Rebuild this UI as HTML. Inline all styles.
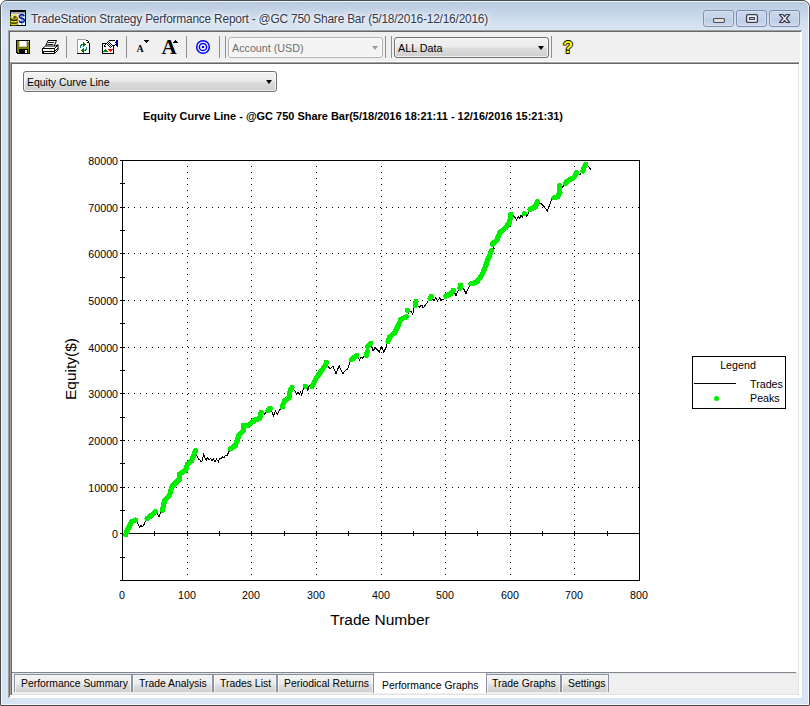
<!DOCTYPE html>
<html>
<head>
<meta charset="utf-8">
<title>TradeStation Strategy Performance Report</title>
<style>
html,body{margin:0;padding:0;}
body{width:810px;height:706px;background:#fff;overflow:hidden;position:relative;font-family:"Liberation Sans",Arial,sans-serif;}
.abs{position:absolute;}
#win{position:absolute;left:0;top:0;width:808px;height:704px;border:1px solid #4a4a4a;border-radius:7px 7px 1px 1px;
 background:linear-gradient(to bottom,#b8c9df 0px,#c2d2e7 9px,#d0deee 20px,#d9e5f3 30px,#d7e4f2 60px,#d7e4f2 100%);overflow:hidden;}
#win:before{content:"";position:absolute;left:0;top:0;right:0;bottom:0;border:1px solid rgba(255,255,255,.75);border-radius:6px 6px 0 0;}
#title{position:absolute;left:31px;top:11px;font-size:11.9px;letter-spacing:-0.2px;line-height:16px;color:#33374a;white-space:nowrap;text-shadow:0 0 6px #fff,0 0 10px #fff,0 0 3px #fff;}
.cap{position:absolute;top:10px;box-sizing:border-box;width:31px;height:17px;border:1px solid #7d8bb0;border-radius:3px;background:linear-gradient(to bottom,#c8d7eb 0,#c5d4e9 45%,#bccde3 52%,#cad8ec 100%);box-shadow:inset 0 0 0 1px rgba(255,255,255,.3);}
#client{position:absolute;left:8px;top:30px;width:794px;height:668px;background:#fff;}
#tb{position:absolute;left:10px;top:32px;width:790px;height:29px;background:#f0f0f0;}
.sep{position:absolute;top:36px;width:1px;height:22px;background:#8f8f8f;}
.dd{position:absolute;box-sizing:border-box;border:1px solid #707070;border-radius:3px;background:linear-gradient(to bottom,#f2f2f2 0,#ebebeb 48%,#dddddd 52%,#cfcfcf 100%);box-shadow:inset 0 0 0 1px rgba(255,255,255,.7);font-size:11.5px;white-space:nowrap;color:#000;}
.dd span{position:absolute;left:3px;top:0;display:inline-block;transform-origin:0 50%;}
.dd i{position:absolute;right:4px;width:0;height:0;border-left:3.5px solid transparent;border-right:3.5px solid transparent;border-top:4px solid #000;}
#pane{position:absolute;left:12px;top:64px;width:786px;height:609px;background:#fff;}
.tab{position:absolute;top:674px;height:18px;box-sizing:border-box;border:1px solid #8b92a1;border-bottom:none;background:linear-gradient(to bottom,#f3f3f3 0,#ececec 9px,#dedede 10px,#d0d0d0 17px);font-size:11px;line-height:14px;white-space:nowrap;color:#000;box-shadow:inset 1px 0 0 rgba(255,255,255,.6),inset -1px 0 0 rgba(255,255,255,.45);}
.tab span{position:absolute;top:1px;display:inline-block;transform:scaleX(.945);transform-origin:0 50%;}
.tab.sel{top:672px;height:21px;background:#fff;box-shadow:none;}
.tab.sel span{top:5px;}
</style>
</head>
<body>
<div id="win">
</div>
<div id="title">TradeStation Strategy Performance Report - @GC 750 Share Bar (5/18/2016-12/16/2016)</div>
<!-- caption buttons -->
<div class="cap" style="left:703px;border-color:#8c919c"><svg class="abs" style="left:0px;top:-1px" width="30" height="17"><rect x="9.5" y="8.500" width="11" height="4" rx="1.200" fill="#dedede" stroke="#4b4b55" stroke-width="1.100"/></svg></div>
<div class="cap" style="left:736px"><svg class="abs" style="left:0px;top:-1px" width="30" height="17"><rect x="9.600" y="4.600" width="10.800" height="7.800" rx="1.200" fill="#f2f2f2" stroke="#3d4052" stroke-width="1.300"/><rect x="12.500" y="7.500" width="5" height="2" fill="#b9c7dc" stroke="#3d4052" stroke-width="1"/></svg></div>
<div class="cap" style="left:769px"><svg class="abs" style="left:0px;top:-1px" width="30" height="17"><path d="M9.500 4.500h3.400l1.700 2.100 1.700-2.100h3.400l-3.400 4 3.400 4h-3.400l-1.700-2.100-1.700 2.100h-3.400l3.400-4z" fill="#f5f5f5" stroke="#3d4052" stroke-width="1.200" stroke-linejoin="round"/></svg></div>

<div id="client"></div>
<div class="abs" style="left:8px;top:30px;width:794px;height:1px;background:#a0a0a0"></div>
<div class="abs" style="left:8px;top:30px;width:1px;height:668px;background:#a0a0a0"></div>
<div class="abs" style="left:9px;top:31px;width:792px;height:1px;background:#696969"></div>
<div class="abs" style="left:9px;top:31px;width:1px;height:666px;background:#696969"></div>
<div id="tb"></div>
<!-- sunken edge of pane -->
<div class="abs" style="left:10px;top:62px;width:789px;height:633px;background:#a0a0a0"></div>
<div class="abs" style="left:11px;top:63px;width:788px;height:632px;background:#696969"></div>
<div class="abs" style="left:12px;top:64px;width:787px;height:631px;background:#e3e3e3"></div>
<div id="pane"></div>
<div class="abs" style="left:12px;top:672px;width:784px;height:1px;background:#7f8691"></div>
<div class="abs" style="left:12px;top:674px;width:786px;height:20px;background:#f0f0f0"></div>
<!-- toolbar separators -->
<div class="sep" style="left:66px"></div>
<div class="sep" style="left:126px"></div>
<div class="sep" style="left:186px"></div>
<div class="sep" style="left:219px"></div>
<div class="sep" style="left:225px"></div>
<div class="sep" style="left:385px"></div>
<div class="sep" style="left:391px"></div>
<div class="sep" style="left:551px"></div>

<!-- dropdowns -->
<div class="dd" style="left:228px;top:37px;width:155px;height:21px;border-color:#adb2b5;background:#f4f4f4;color:#6d6d6d;line-height:21px;font-size:11.8px"><span style="transform:scaleX(.91)">Account (USD)</span><i style="top:8px;border-top-color:#9a9a9a"></i></div>
<div class="dd" style="left:394px;top:37px;width:155px;height:21px;line-height:21px;font-size:11.8px"><span style="transform:scaleX(.91)">ALL Data</span><i style="top:8px"></i></div>
<div class="dd" style="left:23px;top:71px;width:254px;height:21px;line-height:21px;font-size:11px"><span style="transform:scaleX(.95)">Equity Curve Line</span><i style="top:8px"></i></div>

<svg width="810" height="70" viewBox="0 0 810 70" style="position:absolute;left:0;top:0">
<!-- app icon -->
<g shape-rendering="crispEdges">
<rect x="10" y="10" width="16" height="16" fill="#000"/>
<rect x="11" y="12" width="14" height="13" fill="#e8e8e8"/>
<rect x="11" y="12" width="14" height="2" fill="#a8a8a8"/>
<rect x="19" y="14" width="6" height="11" fill="#fff"/>
</g>
<text x="18.300" y="23.400" font-family="'Liberation Sans',sans-serif" font-weight="bold" font-size="12.500" fill="#0c0c9c">$</text>
<g>
<path d="M10.300 17.500v6.700a3.700 1.500 0 0 0 7.400 0v-6.700z" fill="#1c1c00"/>
<path d="M10.300 19.400a3.700 1.500 0 0 0 7.400 0v1.700a3.700 1.500 0 0 1-7.400 0z" fill="#e2e200"/>
<path d="M10.300 22.200a3.700 1.500 0 0 0 7.400 0v1.500a3.700 1.500 0 0 1-7.400 0z" fill="#d6d600"/>
<ellipse cx="14" cy="17.300" rx="3.300" ry="1.900" fill="#55550a" stroke="#e8e800" stroke-width="1"/>
<ellipse cx="12.400" cy="16.900" rx="1.300" ry=".800" fill="#fff"/>
</g>
<!-- floppy -->
<g shape-rendering="crispEdges">
<path d="M16 40h14v14h-13v-1h-1z" fill="#000"/>
<path d="M17 41h12v12h-11v-1h-1z" fill="#808000"/>
<rect x="19" y="41" width="8" height="6" fill="#c8c8c8"/>
<rect x="20" y="41" width="6" height="5" fill="#fff"/>
<rect x="28" y="41" width="1" height="1" fill="#fff"/>
<rect x="19" y="49" width="9" height="4" fill="#000"/>
<rect x="25" y="50" width="2" height="3" fill="#f4f4f4"/>
</g>
<!-- printer -->
<g stroke="#000" stroke-width="1" fill="#fff" stroke-linejoin="miter">
<path d="M45.5 46.5l2.5-6h8.5l-2.5 6z"/>
<path d="M42.5 48.5l3-2.5h10l2.5-1.2v5.2l-3.5 3.5h-12z"/>
<path d="M42.5 48.500h12v3h-12z"/>
<path d="M43.500 51.500h11v2h-11z"/>
<path d="M54.500 48.500l3.5-3.500M54.500 51.500l3.500-3.500M54.500 53.500l3.500-3.500" fill="none"/>
<path d="M48 42.500h6M47.300 44.500h6" fill="none" stroke-width=".9"/>
</g>
<rect x="49" y="49.600" width="3" height="1.200" fill="#e0e000"/>
<!-- doc refresh -->
<g shape-rendering="crispEdges">
<path d="M77 39h9l4 4v11h-13z" fill="#fff"/>
<path d="M77 39h9v1h-8v13h-1z" fill="#a0a0a0"/>
<path d="M77 53h13v1h-13z M89 42h1v12h-1z M86 40h1v3h3v-1h-1v-1h-1v-1h-1v1h1v1h-1z" fill="#000"/>
<rect x="87" y="41" width="1" height="1" fill="#fff"/>
<path d="M83 42h1v5h-1z M84 43h1v3h-1z M85 44h1v1h-1z M81 44h2v1h-2z M83 48h1v5h-1z M82 49h1v3h-1z M81 50h1v1h-1z M84 50h2v1h-2z" fill="#008000"/>
<path d="M80 45h1v3h-1z M81 45h1v1h-1z M86 47h1v3h-1z M85 49h1v1h-1z" fill="#008080"/>
</g>
<!-- properties icon -->
<g shape-rendering="crispEdges">
<rect x="102" y="43" width="12" height="11" fill="#000"/>
<rect x="103" y="44" width="10" height="9" fill="#fff"/>
<path d="M109 41h6v4h-3l-1 2h-2l-4-3z" fill="#fff"/>
<path d="M105 44l3-3h2v3z" fill="#fff"/>
<path d="M116 40h2v7h-1v-1h-1z" fill="#000080"/>
<path d="M109 40h1v1h-1zM110 40h1v1h-1zM111 40h1v1h-1zM112 40h1v1h-1zM113 40h1v1h-1zM114 40h1v1h-1zM108 41h1v1h-1zM107 42h1v1h-1zM109 42h1v1h-1zM106 43h1v1h-1zM108 43h1v1h-1zM110 43h1v1h-1zM105 44h1v1h-1zM107 44h1v1h-1zM109 44h1v1h-1zM111 44h1v1h-1zM115 42h1v1h-1zM115 44h1v1h-1zM104 45h1v1h-1zM108 45h1v1h-1zM110 45h1v1h-1zM112 45h1v1h-1zM113 45h1v1h-1zM114 45h1v1h-1zM104 46h1v1h-1zM105 46h1v1h-1zM109 46h1v1h-1zM111 46h1v1h-1zM110 47h1v1h-1z" fill="#000"/>
<path d="M105 49h1v1h-1z M104 50h3v1h-3z M103 51h5v1h-5z" fill="#008000"/>
<path d="M108 49h5v1h-5z M109 50h3v1h-3z M110 51h1v1h-1z" fill="#ff0000"/>
</g>
<!-- font size icons -->
<g font-family="'Liberation Serif',serif" font-weight="bold" fill="#000">
<text x="136.500" y="52" font-size="10">A</text>
<text x="161.600" y="54" font-size="21">A</text>
</g>
<path d="M144 40h5l-2.500 3z" fill="#000" shape-rendering="crispEdges"/>
<path d="M173 42.500h5l-2.500-3z" fill="#000" shape-rendering="crispEdges"/>
<!-- target -->
<g fill="none" stroke="#0000ff">
<circle cx="203" cy="47" r="6.300" stroke-width="1.500" fill="#fff"/>
<circle cx="203" cy="47" r="3.600" stroke-width="1.500"/>
<circle cx="203" cy="47" r="1.300" fill="#0000ff" stroke="none"/>
</g>
<!-- help -->
<text x="563" y="52.500" font-family="'Liberation Sans',sans-serif" font-weight="bold" font-size="16.500" fill="#ffff00" stroke="#000" stroke-width="1.800" paint-order="stroke" stroke-linejoin="round">?</text>
</svg>

<svg id="chart" width="810" height="706" viewBox="0 0 810 706" style="position:absolute;left:0;top:0">
<g shape-rendering="crispEdges" fill="#000">
<path d="M187 166h1v1h-1zM187 172h1v1h-1zM187 178h1v1h-1zM187 184h1v1h-1zM187 190h1v1h-1zM187 196h1v1h-1zM187 202h1v1h-1zM187 208h1v1h-1zM187 214h1v1h-1zM187 220h1v1h-1zM187 226h1v1h-1zM187 232h1v1h-1zM187 238h1v1h-1zM187 244h1v1h-1zM187 250h1v1h-1zM187 256h1v1h-1zM187 262h1v1h-1zM187 268h1v1h-1zM187 274h1v1h-1zM187 280h1v1h-1zM187 286h1v1h-1zM187 292h1v1h-1zM187 298h1v1h-1zM187 304h1v1h-1zM187 310h1v1h-1zM187 316h1v1h-1zM187 322h1v1h-1zM187 328h1v1h-1zM187 334h1v1h-1zM187 340h1v1h-1zM187 346h1v1h-1zM187 352h1v1h-1zM187 358h1v1h-1zM187 364h1v1h-1zM187 370h1v1h-1zM187 376h1v1h-1zM187 382h1v1h-1zM187 388h1v1h-1zM187 394h1v1h-1zM187 400h1v1h-1zM187 406h1v1h-1zM187 412h1v1h-1zM187 418h1v1h-1zM187 424h1v1h-1zM187 430h1v1h-1zM187 436h1v1h-1zM187 442h1v1h-1zM187 448h1v1h-1zM187 454h1v1h-1zM187 460h1v1h-1zM187 466h1v1h-1zM187 472h1v1h-1zM187 478h1v1h-1zM187 484h1v1h-1zM187 490h1v1h-1zM187 496h1v1h-1zM187 502h1v1h-1zM187 508h1v1h-1zM187 514h1v1h-1zM187 520h1v1h-1zM187 526h1v1h-1zM187 532h1v1h-1zM187 538h1v1h-1zM187 544h1v1h-1zM187 550h1v1h-1zM187 556h1v1h-1zM187 562h1v1h-1zM187 568h1v1h-1zM187 574h1v1h-1zM251 166h1v1h-1zM251 172h1v1h-1zM251 178h1v1h-1zM251 184h1v1h-1zM251 190h1v1h-1zM251 196h1v1h-1zM251 202h1v1h-1zM251 208h1v1h-1zM251 214h1v1h-1zM251 220h1v1h-1zM251 226h1v1h-1zM251 232h1v1h-1zM251 238h1v1h-1zM251 244h1v1h-1zM251 250h1v1h-1zM251 256h1v1h-1zM251 262h1v1h-1zM251 268h1v1h-1zM251 274h1v1h-1zM251 280h1v1h-1zM251 286h1v1h-1zM251 292h1v1h-1zM251 298h1v1h-1zM251 304h1v1h-1zM251 310h1v1h-1zM251 316h1v1h-1zM251 322h1v1h-1zM251 328h1v1h-1zM251 334h1v1h-1zM251 340h1v1h-1zM251 346h1v1h-1zM251 352h1v1h-1zM251 358h1v1h-1zM251 364h1v1h-1zM251 370h1v1h-1zM251 376h1v1h-1zM251 382h1v1h-1zM251 388h1v1h-1zM251 394h1v1h-1zM251 400h1v1h-1zM251 406h1v1h-1zM251 412h1v1h-1zM251 418h1v1h-1zM251 424h1v1h-1zM251 430h1v1h-1zM251 436h1v1h-1zM251 442h1v1h-1zM251 448h1v1h-1zM251 454h1v1h-1zM251 460h1v1h-1zM251 466h1v1h-1zM251 472h1v1h-1zM251 478h1v1h-1zM251 484h1v1h-1zM251 490h1v1h-1zM251 496h1v1h-1zM251 502h1v1h-1zM251 508h1v1h-1zM251 514h1v1h-1zM251 520h1v1h-1zM251 526h1v1h-1zM251 532h1v1h-1zM251 538h1v1h-1zM251 544h1v1h-1zM251 550h1v1h-1zM251 556h1v1h-1zM251 562h1v1h-1zM251 568h1v1h-1zM251 574h1v1h-1zM316 166h1v1h-1zM316 172h1v1h-1zM316 178h1v1h-1zM316 184h1v1h-1zM316 190h1v1h-1zM316 196h1v1h-1zM316 202h1v1h-1zM316 208h1v1h-1zM316 214h1v1h-1zM316 220h1v1h-1zM316 226h1v1h-1zM316 232h1v1h-1zM316 238h1v1h-1zM316 244h1v1h-1zM316 250h1v1h-1zM316 256h1v1h-1zM316 262h1v1h-1zM316 268h1v1h-1zM316 274h1v1h-1zM316 280h1v1h-1zM316 286h1v1h-1zM316 292h1v1h-1zM316 298h1v1h-1zM316 304h1v1h-1zM316 310h1v1h-1zM316 316h1v1h-1zM316 322h1v1h-1zM316 328h1v1h-1zM316 334h1v1h-1zM316 340h1v1h-1zM316 346h1v1h-1zM316 352h1v1h-1zM316 358h1v1h-1zM316 364h1v1h-1zM316 370h1v1h-1zM316 376h1v1h-1zM316 382h1v1h-1zM316 388h1v1h-1zM316 394h1v1h-1zM316 400h1v1h-1zM316 406h1v1h-1zM316 412h1v1h-1zM316 418h1v1h-1zM316 424h1v1h-1zM316 430h1v1h-1zM316 436h1v1h-1zM316 442h1v1h-1zM316 448h1v1h-1zM316 454h1v1h-1zM316 460h1v1h-1zM316 466h1v1h-1zM316 472h1v1h-1zM316 478h1v1h-1zM316 484h1v1h-1zM316 490h1v1h-1zM316 496h1v1h-1zM316 502h1v1h-1zM316 508h1v1h-1zM316 514h1v1h-1zM316 520h1v1h-1zM316 526h1v1h-1zM316 532h1v1h-1zM316 538h1v1h-1zM316 544h1v1h-1zM316 550h1v1h-1zM316 556h1v1h-1zM316 562h1v1h-1zM316 568h1v1h-1zM316 574h1v1h-1zM381 166h1v1h-1zM381 172h1v1h-1zM381 178h1v1h-1zM381 184h1v1h-1zM381 190h1v1h-1zM381 196h1v1h-1zM381 202h1v1h-1zM381 208h1v1h-1zM381 214h1v1h-1zM381 220h1v1h-1zM381 226h1v1h-1zM381 232h1v1h-1zM381 238h1v1h-1zM381 244h1v1h-1zM381 250h1v1h-1zM381 256h1v1h-1zM381 262h1v1h-1zM381 268h1v1h-1zM381 274h1v1h-1zM381 280h1v1h-1zM381 286h1v1h-1zM381 292h1v1h-1zM381 298h1v1h-1zM381 304h1v1h-1zM381 310h1v1h-1zM381 316h1v1h-1zM381 322h1v1h-1zM381 328h1v1h-1zM381 334h1v1h-1zM381 340h1v1h-1zM381 346h1v1h-1zM381 352h1v1h-1zM381 358h1v1h-1zM381 364h1v1h-1zM381 370h1v1h-1zM381 376h1v1h-1zM381 382h1v1h-1zM381 388h1v1h-1zM381 394h1v1h-1zM381 400h1v1h-1zM381 406h1v1h-1zM381 412h1v1h-1zM381 418h1v1h-1zM381 424h1v1h-1zM381 430h1v1h-1zM381 436h1v1h-1zM381 442h1v1h-1zM381 448h1v1h-1zM381 454h1v1h-1zM381 460h1v1h-1zM381 466h1v1h-1zM381 472h1v1h-1zM381 478h1v1h-1zM381 484h1v1h-1zM381 490h1v1h-1zM381 496h1v1h-1zM381 502h1v1h-1zM381 508h1v1h-1zM381 514h1v1h-1zM381 520h1v1h-1zM381 526h1v1h-1zM381 532h1v1h-1zM381 538h1v1h-1zM381 544h1v1h-1zM381 550h1v1h-1zM381 556h1v1h-1zM381 562h1v1h-1zM381 568h1v1h-1zM381 574h1v1h-1zM445 166h1v1h-1zM445 172h1v1h-1zM445 178h1v1h-1zM445 184h1v1h-1zM445 190h1v1h-1zM445 196h1v1h-1zM445 202h1v1h-1zM445 208h1v1h-1zM445 214h1v1h-1zM445 220h1v1h-1zM445 226h1v1h-1zM445 232h1v1h-1zM445 238h1v1h-1zM445 244h1v1h-1zM445 250h1v1h-1zM445 256h1v1h-1zM445 262h1v1h-1zM445 268h1v1h-1zM445 274h1v1h-1zM445 280h1v1h-1zM445 286h1v1h-1zM445 292h1v1h-1zM445 298h1v1h-1zM445 304h1v1h-1zM445 310h1v1h-1zM445 316h1v1h-1zM445 322h1v1h-1zM445 328h1v1h-1zM445 334h1v1h-1zM445 340h1v1h-1zM445 346h1v1h-1zM445 352h1v1h-1zM445 358h1v1h-1zM445 364h1v1h-1zM445 370h1v1h-1zM445 376h1v1h-1zM445 382h1v1h-1zM445 388h1v1h-1zM445 394h1v1h-1zM445 400h1v1h-1zM445 406h1v1h-1zM445 412h1v1h-1zM445 418h1v1h-1zM445 424h1v1h-1zM445 430h1v1h-1zM445 436h1v1h-1zM445 442h1v1h-1zM445 448h1v1h-1zM445 454h1v1h-1zM445 460h1v1h-1zM445 466h1v1h-1zM445 472h1v1h-1zM445 478h1v1h-1zM445 484h1v1h-1zM445 490h1v1h-1zM445 496h1v1h-1zM445 502h1v1h-1zM445 508h1v1h-1zM445 514h1v1h-1zM445 520h1v1h-1zM445 526h1v1h-1zM445 532h1v1h-1zM445 538h1v1h-1zM445 544h1v1h-1zM445 550h1v1h-1zM445 556h1v1h-1zM445 562h1v1h-1zM445 568h1v1h-1zM445 574h1v1h-1zM510 166h1v1h-1zM510 172h1v1h-1zM510 178h1v1h-1zM510 184h1v1h-1zM510 190h1v1h-1zM510 196h1v1h-1zM510 202h1v1h-1zM510 208h1v1h-1zM510 214h1v1h-1zM510 220h1v1h-1zM510 226h1v1h-1zM510 232h1v1h-1zM510 238h1v1h-1zM510 244h1v1h-1zM510 250h1v1h-1zM510 256h1v1h-1zM510 262h1v1h-1zM510 268h1v1h-1zM510 274h1v1h-1zM510 280h1v1h-1zM510 286h1v1h-1zM510 292h1v1h-1zM510 298h1v1h-1zM510 304h1v1h-1zM510 310h1v1h-1zM510 316h1v1h-1zM510 322h1v1h-1zM510 328h1v1h-1zM510 334h1v1h-1zM510 340h1v1h-1zM510 346h1v1h-1zM510 352h1v1h-1zM510 358h1v1h-1zM510 364h1v1h-1zM510 370h1v1h-1zM510 376h1v1h-1zM510 382h1v1h-1zM510 388h1v1h-1zM510 394h1v1h-1zM510 400h1v1h-1zM510 406h1v1h-1zM510 412h1v1h-1zM510 418h1v1h-1zM510 424h1v1h-1zM510 430h1v1h-1zM510 436h1v1h-1zM510 442h1v1h-1zM510 448h1v1h-1zM510 454h1v1h-1zM510 460h1v1h-1zM510 466h1v1h-1zM510 472h1v1h-1zM510 478h1v1h-1zM510 484h1v1h-1zM510 490h1v1h-1zM510 496h1v1h-1zM510 502h1v1h-1zM510 508h1v1h-1zM510 514h1v1h-1zM510 520h1v1h-1zM510 526h1v1h-1zM510 532h1v1h-1zM510 538h1v1h-1zM510 544h1v1h-1zM510 550h1v1h-1zM510 556h1v1h-1zM510 562h1v1h-1zM510 568h1v1h-1zM510 574h1v1h-1zM574 166h1v1h-1zM574 172h1v1h-1zM574 178h1v1h-1zM574 184h1v1h-1zM574 190h1v1h-1zM574 196h1v1h-1zM574 202h1v1h-1zM574 208h1v1h-1zM574 214h1v1h-1zM574 220h1v1h-1zM574 226h1v1h-1zM574 232h1v1h-1zM574 238h1v1h-1zM574 244h1v1h-1zM574 250h1v1h-1zM574 256h1v1h-1zM574 262h1v1h-1zM574 268h1v1h-1zM574 274h1v1h-1zM574 280h1v1h-1zM574 286h1v1h-1zM574 292h1v1h-1zM574 298h1v1h-1zM574 304h1v1h-1zM574 310h1v1h-1zM574 316h1v1h-1zM574 322h1v1h-1zM574 328h1v1h-1zM574 334h1v1h-1zM574 340h1v1h-1zM574 346h1v1h-1zM574 352h1v1h-1zM574 358h1v1h-1zM574 364h1v1h-1zM574 370h1v1h-1zM574 376h1v1h-1zM574 382h1v1h-1zM574 388h1v1h-1zM574 394h1v1h-1zM574 400h1v1h-1zM574 406h1v1h-1zM574 412h1v1h-1zM574 418h1v1h-1zM574 424h1v1h-1zM574 430h1v1h-1zM574 436h1v1h-1zM574 442h1v1h-1zM574 448h1v1h-1zM574 454h1v1h-1zM574 460h1v1h-1zM574 466h1v1h-1zM574 472h1v1h-1zM574 478h1v1h-1zM574 484h1v1h-1zM574 490h1v1h-1zM574 496h1v1h-1zM574 502h1v1h-1zM574 508h1v1h-1zM574 514h1v1h-1zM574 520h1v1h-1zM574 526h1v1h-1zM574 532h1v1h-1zM574 538h1v1h-1zM574 544h1v1h-1zM574 550h1v1h-1zM574 556h1v1h-1zM574 562h1v1h-1zM574 568h1v1h-1zM574 574h1v1h-1zM128 487h1v1h-1zM134 487h1v1h-1zM140 487h1v1h-1zM146 487h1v1h-1zM152 487h1v1h-1zM158 487h1v1h-1zM164 487h1v1h-1zM170 487h1v1h-1zM176 487h1v1h-1zM182 487h1v1h-1zM188 487h1v1h-1zM194 487h1v1h-1zM200 487h1v1h-1zM206 487h1v1h-1zM212 487h1v1h-1zM218 487h1v1h-1zM224 487h1v1h-1zM230 487h1v1h-1zM236 487h1v1h-1zM242 487h1v1h-1zM248 487h1v1h-1zM254 487h1v1h-1zM260 487h1v1h-1zM266 487h1v1h-1zM272 487h1v1h-1zM278 487h1v1h-1zM284 487h1v1h-1zM290 487h1v1h-1zM296 487h1v1h-1zM302 487h1v1h-1zM308 487h1v1h-1zM314 487h1v1h-1zM320 487h1v1h-1zM326 487h1v1h-1zM332 487h1v1h-1zM338 487h1v1h-1zM344 487h1v1h-1zM350 487h1v1h-1zM356 487h1v1h-1zM362 487h1v1h-1zM368 487h1v1h-1zM374 487h1v1h-1zM380 487h1v1h-1zM386 487h1v1h-1zM392 487h1v1h-1zM398 487h1v1h-1zM404 487h1v1h-1zM410 487h1v1h-1zM416 487h1v1h-1zM422 487h1v1h-1zM428 487h1v1h-1zM434 487h1v1h-1zM440 487h1v1h-1zM446 487h1v1h-1zM452 487h1v1h-1zM458 487h1v1h-1zM464 487h1v1h-1zM470 487h1v1h-1zM476 487h1v1h-1zM482 487h1v1h-1zM488 487h1v1h-1zM494 487h1v1h-1zM500 487h1v1h-1zM506 487h1v1h-1zM512 487h1v1h-1zM518 487h1v1h-1zM524 487h1v1h-1zM530 487h1v1h-1zM536 487h1v1h-1zM542 487h1v1h-1zM548 487h1v1h-1zM554 487h1v1h-1zM560 487h1v1h-1zM566 487h1v1h-1zM572 487h1v1h-1zM578 487h1v1h-1zM584 487h1v1h-1zM590 487h1v1h-1zM596 487h1v1h-1zM602 487h1v1h-1zM608 487h1v1h-1zM614 487h1v1h-1zM620 487h1v1h-1zM626 487h1v1h-1zM632 487h1v1h-1zM638 487h1v1h-1zM128 440h1v1h-1zM134 440h1v1h-1zM140 440h1v1h-1zM146 440h1v1h-1zM152 440h1v1h-1zM158 440h1v1h-1zM164 440h1v1h-1zM170 440h1v1h-1zM176 440h1v1h-1zM182 440h1v1h-1zM188 440h1v1h-1zM194 440h1v1h-1zM200 440h1v1h-1zM206 440h1v1h-1zM212 440h1v1h-1zM218 440h1v1h-1zM224 440h1v1h-1zM230 440h1v1h-1zM236 440h1v1h-1zM242 440h1v1h-1zM248 440h1v1h-1zM254 440h1v1h-1zM260 440h1v1h-1zM266 440h1v1h-1zM272 440h1v1h-1zM278 440h1v1h-1zM284 440h1v1h-1zM290 440h1v1h-1zM296 440h1v1h-1zM302 440h1v1h-1zM308 440h1v1h-1zM314 440h1v1h-1zM320 440h1v1h-1zM326 440h1v1h-1zM332 440h1v1h-1zM338 440h1v1h-1zM344 440h1v1h-1zM350 440h1v1h-1zM356 440h1v1h-1zM362 440h1v1h-1zM368 440h1v1h-1zM374 440h1v1h-1zM380 440h1v1h-1zM386 440h1v1h-1zM392 440h1v1h-1zM398 440h1v1h-1zM404 440h1v1h-1zM410 440h1v1h-1zM416 440h1v1h-1zM422 440h1v1h-1zM428 440h1v1h-1zM434 440h1v1h-1zM440 440h1v1h-1zM446 440h1v1h-1zM452 440h1v1h-1zM458 440h1v1h-1zM464 440h1v1h-1zM470 440h1v1h-1zM476 440h1v1h-1zM482 440h1v1h-1zM488 440h1v1h-1zM494 440h1v1h-1zM500 440h1v1h-1zM506 440h1v1h-1zM512 440h1v1h-1zM518 440h1v1h-1zM524 440h1v1h-1zM530 440h1v1h-1zM536 440h1v1h-1zM542 440h1v1h-1zM548 440h1v1h-1zM554 440h1v1h-1zM560 440h1v1h-1zM566 440h1v1h-1zM572 440h1v1h-1zM578 440h1v1h-1zM584 440h1v1h-1zM590 440h1v1h-1zM596 440h1v1h-1zM602 440h1v1h-1zM608 440h1v1h-1zM614 440h1v1h-1zM620 440h1v1h-1zM626 440h1v1h-1zM632 440h1v1h-1zM638 440h1v1h-1zM128 393h1v1h-1zM134 393h1v1h-1zM140 393h1v1h-1zM146 393h1v1h-1zM152 393h1v1h-1zM158 393h1v1h-1zM164 393h1v1h-1zM170 393h1v1h-1zM176 393h1v1h-1zM182 393h1v1h-1zM188 393h1v1h-1zM194 393h1v1h-1zM200 393h1v1h-1zM206 393h1v1h-1zM212 393h1v1h-1zM218 393h1v1h-1zM224 393h1v1h-1zM230 393h1v1h-1zM236 393h1v1h-1zM242 393h1v1h-1zM248 393h1v1h-1zM254 393h1v1h-1zM260 393h1v1h-1zM266 393h1v1h-1zM272 393h1v1h-1zM278 393h1v1h-1zM284 393h1v1h-1zM290 393h1v1h-1zM296 393h1v1h-1zM302 393h1v1h-1zM308 393h1v1h-1zM314 393h1v1h-1zM320 393h1v1h-1zM326 393h1v1h-1zM332 393h1v1h-1zM338 393h1v1h-1zM344 393h1v1h-1zM350 393h1v1h-1zM356 393h1v1h-1zM362 393h1v1h-1zM368 393h1v1h-1zM374 393h1v1h-1zM380 393h1v1h-1zM386 393h1v1h-1zM392 393h1v1h-1zM398 393h1v1h-1zM404 393h1v1h-1zM410 393h1v1h-1zM416 393h1v1h-1zM422 393h1v1h-1zM428 393h1v1h-1zM434 393h1v1h-1zM440 393h1v1h-1zM446 393h1v1h-1zM452 393h1v1h-1zM458 393h1v1h-1zM464 393h1v1h-1zM470 393h1v1h-1zM476 393h1v1h-1zM482 393h1v1h-1zM488 393h1v1h-1zM494 393h1v1h-1zM500 393h1v1h-1zM506 393h1v1h-1zM512 393h1v1h-1zM518 393h1v1h-1zM524 393h1v1h-1zM530 393h1v1h-1zM536 393h1v1h-1zM542 393h1v1h-1zM548 393h1v1h-1zM554 393h1v1h-1zM560 393h1v1h-1zM566 393h1v1h-1zM572 393h1v1h-1zM578 393h1v1h-1zM584 393h1v1h-1zM590 393h1v1h-1zM596 393h1v1h-1zM602 393h1v1h-1zM608 393h1v1h-1zM614 393h1v1h-1zM620 393h1v1h-1zM626 393h1v1h-1zM632 393h1v1h-1zM638 393h1v1h-1zM128 347h1v1h-1zM134 347h1v1h-1zM140 347h1v1h-1zM146 347h1v1h-1zM152 347h1v1h-1zM158 347h1v1h-1zM164 347h1v1h-1zM170 347h1v1h-1zM176 347h1v1h-1zM182 347h1v1h-1zM188 347h1v1h-1zM194 347h1v1h-1zM200 347h1v1h-1zM206 347h1v1h-1zM212 347h1v1h-1zM218 347h1v1h-1zM224 347h1v1h-1zM230 347h1v1h-1zM236 347h1v1h-1zM242 347h1v1h-1zM248 347h1v1h-1zM254 347h1v1h-1zM260 347h1v1h-1zM266 347h1v1h-1zM272 347h1v1h-1zM278 347h1v1h-1zM284 347h1v1h-1zM290 347h1v1h-1zM296 347h1v1h-1zM302 347h1v1h-1zM308 347h1v1h-1zM314 347h1v1h-1zM320 347h1v1h-1zM326 347h1v1h-1zM332 347h1v1h-1zM338 347h1v1h-1zM344 347h1v1h-1zM350 347h1v1h-1zM356 347h1v1h-1zM362 347h1v1h-1zM368 347h1v1h-1zM374 347h1v1h-1zM380 347h1v1h-1zM386 347h1v1h-1zM392 347h1v1h-1zM398 347h1v1h-1zM404 347h1v1h-1zM410 347h1v1h-1zM416 347h1v1h-1zM422 347h1v1h-1zM428 347h1v1h-1zM434 347h1v1h-1zM440 347h1v1h-1zM446 347h1v1h-1zM452 347h1v1h-1zM458 347h1v1h-1zM464 347h1v1h-1zM470 347h1v1h-1zM476 347h1v1h-1zM482 347h1v1h-1zM488 347h1v1h-1zM494 347h1v1h-1zM500 347h1v1h-1zM506 347h1v1h-1zM512 347h1v1h-1zM518 347h1v1h-1zM524 347h1v1h-1zM530 347h1v1h-1zM536 347h1v1h-1zM542 347h1v1h-1zM548 347h1v1h-1zM554 347h1v1h-1zM560 347h1v1h-1zM566 347h1v1h-1zM572 347h1v1h-1zM578 347h1v1h-1zM584 347h1v1h-1zM590 347h1v1h-1zM596 347h1v1h-1zM602 347h1v1h-1zM608 347h1v1h-1zM614 347h1v1h-1zM620 347h1v1h-1zM626 347h1v1h-1zM632 347h1v1h-1zM638 347h1v1h-1zM128 300h1v1h-1zM134 300h1v1h-1zM140 300h1v1h-1zM146 300h1v1h-1zM152 300h1v1h-1zM158 300h1v1h-1zM164 300h1v1h-1zM170 300h1v1h-1zM176 300h1v1h-1zM182 300h1v1h-1zM188 300h1v1h-1zM194 300h1v1h-1zM200 300h1v1h-1zM206 300h1v1h-1zM212 300h1v1h-1zM218 300h1v1h-1zM224 300h1v1h-1zM230 300h1v1h-1zM236 300h1v1h-1zM242 300h1v1h-1zM248 300h1v1h-1zM254 300h1v1h-1zM260 300h1v1h-1zM266 300h1v1h-1zM272 300h1v1h-1zM278 300h1v1h-1zM284 300h1v1h-1zM290 300h1v1h-1zM296 300h1v1h-1zM302 300h1v1h-1zM308 300h1v1h-1zM314 300h1v1h-1zM320 300h1v1h-1zM326 300h1v1h-1zM332 300h1v1h-1zM338 300h1v1h-1zM344 300h1v1h-1zM350 300h1v1h-1zM356 300h1v1h-1zM362 300h1v1h-1zM368 300h1v1h-1zM374 300h1v1h-1zM380 300h1v1h-1zM386 300h1v1h-1zM392 300h1v1h-1zM398 300h1v1h-1zM404 300h1v1h-1zM410 300h1v1h-1zM416 300h1v1h-1zM422 300h1v1h-1zM428 300h1v1h-1zM434 300h1v1h-1zM440 300h1v1h-1zM446 300h1v1h-1zM452 300h1v1h-1zM458 300h1v1h-1zM464 300h1v1h-1zM470 300h1v1h-1zM476 300h1v1h-1zM482 300h1v1h-1zM488 300h1v1h-1zM494 300h1v1h-1zM500 300h1v1h-1zM506 300h1v1h-1zM512 300h1v1h-1zM518 300h1v1h-1zM524 300h1v1h-1zM530 300h1v1h-1zM536 300h1v1h-1zM542 300h1v1h-1zM548 300h1v1h-1zM554 300h1v1h-1zM560 300h1v1h-1zM566 300h1v1h-1zM572 300h1v1h-1zM578 300h1v1h-1zM584 300h1v1h-1zM590 300h1v1h-1zM596 300h1v1h-1zM602 300h1v1h-1zM608 300h1v1h-1zM614 300h1v1h-1zM620 300h1v1h-1zM626 300h1v1h-1zM632 300h1v1h-1zM638 300h1v1h-1zM128 253h1v1h-1zM134 253h1v1h-1zM140 253h1v1h-1zM146 253h1v1h-1zM152 253h1v1h-1zM158 253h1v1h-1zM164 253h1v1h-1zM170 253h1v1h-1zM176 253h1v1h-1zM182 253h1v1h-1zM188 253h1v1h-1zM194 253h1v1h-1zM200 253h1v1h-1zM206 253h1v1h-1zM212 253h1v1h-1zM218 253h1v1h-1zM224 253h1v1h-1zM230 253h1v1h-1zM236 253h1v1h-1zM242 253h1v1h-1zM248 253h1v1h-1zM254 253h1v1h-1zM260 253h1v1h-1zM266 253h1v1h-1zM272 253h1v1h-1zM278 253h1v1h-1zM284 253h1v1h-1zM290 253h1v1h-1zM296 253h1v1h-1zM302 253h1v1h-1zM308 253h1v1h-1zM314 253h1v1h-1zM320 253h1v1h-1zM326 253h1v1h-1zM332 253h1v1h-1zM338 253h1v1h-1zM344 253h1v1h-1zM350 253h1v1h-1zM356 253h1v1h-1zM362 253h1v1h-1zM368 253h1v1h-1zM374 253h1v1h-1zM380 253h1v1h-1zM386 253h1v1h-1zM392 253h1v1h-1zM398 253h1v1h-1zM404 253h1v1h-1zM410 253h1v1h-1zM416 253h1v1h-1zM422 253h1v1h-1zM428 253h1v1h-1zM434 253h1v1h-1zM440 253h1v1h-1zM446 253h1v1h-1zM452 253h1v1h-1zM458 253h1v1h-1zM464 253h1v1h-1zM470 253h1v1h-1zM476 253h1v1h-1zM482 253h1v1h-1zM488 253h1v1h-1zM494 253h1v1h-1zM500 253h1v1h-1zM506 253h1v1h-1zM512 253h1v1h-1zM518 253h1v1h-1zM524 253h1v1h-1zM530 253h1v1h-1zM536 253h1v1h-1zM542 253h1v1h-1zM548 253h1v1h-1zM554 253h1v1h-1zM560 253h1v1h-1zM566 253h1v1h-1zM572 253h1v1h-1zM578 253h1v1h-1zM584 253h1v1h-1zM590 253h1v1h-1zM596 253h1v1h-1zM602 253h1v1h-1zM608 253h1v1h-1zM614 253h1v1h-1zM620 253h1v1h-1zM626 253h1v1h-1zM632 253h1v1h-1zM638 253h1v1h-1zM128 207h1v1h-1zM134 207h1v1h-1zM140 207h1v1h-1zM146 207h1v1h-1zM152 207h1v1h-1zM158 207h1v1h-1zM164 207h1v1h-1zM170 207h1v1h-1zM176 207h1v1h-1zM182 207h1v1h-1zM188 207h1v1h-1zM194 207h1v1h-1zM200 207h1v1h-1zM206 207h1v1h-1zM212 207h1v1h-1zM218 207h1v1h-1zM224 207h1v1h-1zM230 207h1v1h-1zM236 207h1v1h-1zM242 207h1v1h-1zM248 207h1v1h-1zM254 207h1v1h-1zM260 207h1v1h-1zM266 207h1v1h-1zM272 207h1v1h-1zM278 207h1v1h-1zM284 207h1v1h-1zM290 207h1v1h-1zM296 207h1v1h-1zM302 207h1v1h-1zM308 207h1v1h-1zM314 207h1v1h-1zM320 207h1v1h-1zM326 207h1v1h-1zM332 207h1v1h-1zM338 207h1v1h-1zM344 207h1v1h-1zM350 207h1v1h-1zM356 207h1v1h-1zM362 207h1v1h-1zM368 207h1v1h-1zM374 207h1v1h-1zM380 207h1v1h-1zM386 207h1v1h-1zM392 207h1v1h-1zM398 207h1v1h-1zM404 207h1v1h-1zM410 207h1v1h-1zM416 207h1v1h-1zM422 207h1v1h-1zM428 207h1v1h-1zM434 207h1v1h-1zM440 207h1v1h-1zM446 207h1v1h-1zM452 207h1v1h-1zM458 207h1v1h-1zM464 207h1v1h-1zM470 207h1v1h-1zM476 207h1v1h-1zM482 207h1v1h-1zM488 207h1v1h-1zM494 207h1v1h-1zM500 207h1v1h-1zM506 207h1v1h-1zM512 207h1v1h-1zM518 207h1v1h-1zM524 207h1v1h-1zM530 207h1v1h-1zM536 207h1v1h-1zM542 207h1v1h-1zM548 207h1v1h-1zM554 207h1v1h-1zM560 207h1v1h-1zM566 207h1v1h-1zM572 207h1v1h-1zM578 207h1v1h-1zM584 207h1v1h-1zM590 207h1v1h-1zM596 207h1v1h-1zM602 207h1v1h-1zM608 207h1v1h-1zM614 207h1v1h-1zM620 207h1v1h-1zM626 207h1v1h-1zM632 207h1v1h-1zM638 207h1v1h-1z"/>
<path d="M122 160h518v1h-518z M122 160h1v421h-1z M639 160h1v421h-1z M122 580h518v1h-518z M122 533h517v1h-517z"/>
<path d="M120 580h5v1h-5zM120 557h5v1h-5zM120 533h5v1h-5zM120 510h5v1h-5zM120 487h5v1h-5zM120 463h5v1h-5zM120 440h5v1h-5zM120 417h5v1h-5zM120 393h5v1h-5zM120 370h5v1h-5zM120 347h5v1h-5zM120 323h5v1h-5zM120 300h5v1h-5zM120 277h5v1h-5zM120 253h5v1h-5zM120 230h5v1h-5zM120 207h5v1h-5zM120 183h5v1h-5zM120 160h5v1h-5zM154 531h1v5h-1zM187 531h1v5h-1zM219 531h1v5h-1zM251 531h1v5h-1zM284 531h1v5h-1zM316 531h1v5h-1zM348 531h1v5h-1zM381 531h1v5h-1zM413 531h1v5h-1zM445 531h1v5h-1zM477 531h1v5h-1zM510 531h1v5h-1zM542 531h1v5h-1zM574 531h1v5h-1zM607 531h1v5h-1z"/>
</g>
<polyline points="125.7,534.5 127.5,530.0 129.5,526.0 131.3,522.0 133.5,521.0 135.6,520.0 137.5,523.0 139.6,527.4 141.0,525.0 142.2,527.0 144.3,524.0 145.5,520.5 147.0,518.5 150.0,516.5 152.5,514.5 155.4,511.7 157.0,513.0 159.0,516.5 161.0,512.0 162.4,510.2 163.5,505.0 165.0,500.0 167.0,498.0 169.3,496.0 170.5,491.0 172.0,486.7 175.5,483.0 179.4,478.9 179.4,474.3 183.0,472.0 186.0,469.6 187.4,464.4 191.5,461.0 193.5,455.5 195.6,450.6 197.0,456.0 198.5,459.0 200.0,460.0 201.0,462.0 202.2,461.0 203.5,454.3 205.0,458.0 206.3,460.0 207.5,457.5 209.0,460.0 210.5,458.5 212.0,461.0 213.5,459.0 215.0,461.5 216.5,459.0 218.3,461.7 219.5,458.5 221.0,459.0 222.5,457.0 224.0,457.5 225.5,455.5 227.0,456.0 228.5,452.4 230.4,448.7 232.5,447.5 235.0,446.0 237.0,441.0 238.7,435.7 241.0,433.0 243.3,431.0 243.3,425.4 246.0,425.6 248.5,425.4 251.0,423.0 254.0,420.4 257.0,419.5 259.6,418.5 260.5,415.0 261.3,412.4 263.0,413.5 264.5,414.5 266.0,412.0 268.0,410.6 270.4,408.3 272.0,412.0 273.5,416.0 275.4,410.6 277.2,414.3 279.6,410.0 281.0,409.0 282.4,406.9 283.5,403.5 284.6,400.7 287.0,399.0 288.9,398.0 289.6,394.0 290.2,391.0 292.0,387.4 293.5,389.5 294.8,391.0 296.7,394.0 298.0,392.0 299.2,394.5 300.4,392.0 301.5,394.4 302.6,390.5 304.0,388.0 305.4,386.5 306.8,388.0 307.8,390.2 309.3,385.6 310.5,387.5 312.0,386.5 314.0,382.5 316.0,378.5 318.5,375.0 320.7,371.7 323.0,368.5 325.4,365.2 326.3,362.4 328.0,366.0 330.0,369.0 332.8,366.0 334.5,370.0 336.0,373.5 337.8,369.0 339.3,366.0 341.0,370.0 343.0,373.5 345.0,371.0 346.5,370.5 348.5,367.0 349.5,363.0 351.3,359.6 354.0,357.5 356.9,355.6 358.5,358.0 359.6,359.8 361.0,357.5 362.4,358.0 364.0,356.5 366.5,355.2 367.2,351.8 367.8,346.3 370.6,343.3 372.0,347.5 373.0,351.0 374.5,349.0 375.7,348.0 377.5,350.0 379.4,352.0 380.5,349.0 381.9,347.2 383.0,350.0 384.0,352.4 385.5,348.0 386.9,344.4 388.0,341.7 389.6,337.0 392.5,334.5 395.0,332.4 397.0,328.0 398.9,324.0 400.7,319.4 403.5,318.0 406.3,316.7 408.0,314.5 408.5,312.0 407.2,310.2 409.0,311.5 411.0,311.0 412.8,314.8 413.8,308.0 415.2,305.6 416.0,301.5 417.5,305.0 419.3,307.4 420.8,305.5 422.0,305.5 423.0,308.3 425.0,305.5 427.6,301.9 430.0,298.5 431.3,296.3 432.5,299.0 434.0,301.0 435.5,297.5 437.5,301.0 439.5,298.0 441.5,300.0 444.3,299.0 446.0,296.3 448.5,295.0 450.7,293.5 453.5,290.4 455.0,293.5 456.0,296.0 457.0,293.0 458.3,290.0 460.0,288.0 460.6,285.2 462.0,287.0 463.7,289.0 465.0,291.5 466.0,293.5 467.5,290.0 469.3,286.0 471.0,283.9 474.0,283.0 476.7,281.9 479.0,279.0 481.3,275.9 483.0,272.5 484.4,269.4 485.7,266.0 486.9,262.0 488.3,258.5 489.6,255.6 491.6,250.5 493.0,250.0 494.2,249.0 493.5,247.0 492.8,246.0 492.4,244.4 494.7,242.0 497.0,240.0 498.5,236.0 500.0,232.2 503.0,230.0 505.6,227.8 507.6,225.0 509.6,222.2 510.2,218.0 510.7,214.4 512.5,215.0 514.4,216.7 516.7,220.0 518.2,216.5 519.5,218.5 521.0,215.5 522.2,217.5 523.3,214.4 524.4,213.8 525.6,215.0 526.7,216.7 528.3,213.0 530.0,209.6 533.0,208.0 535.6,206.7 536.5,204.0 537.3,201.6 539.5,203.0 542.2,204.4 544.8,207.5 547.3,211.0 549.0,206.5 551.0,201.0 552.5,199.0 554.0,197.8 557.8,196.7 560.0,192.2 559.6,185.6 561.5,187.5 563.3,186.7 564.3,185.0 565.6,183.3 567.2,181.5 568.9,180.0 571.0,179.0 573.3,177.8 575.0,175.5 576.7,172.9 578.5,174.0 580.0,174.4 581.5,172.5 582.9,171.0 584.4,166.7 585.6,164.4 587.3,165.5 588.9,166.7 590.7,169.6" fill="none" stroke="#000" stroke-width="1" shape-rendering="crispEdges"/>
<g fill="#00ee00" shape-rendering="crispEdges">
<circle cx="125.7" cy="534.5" r="2.6"/>
<circle cx="126.3" cy="533.0" r="2.6"/>
<circle cx="126.9" cy="531.5" r="2.6"/>
<circle cx="127.5" cy="530.0" r="2.6"/>
<circle cx="128.2" cy="528.7" r="2.6"/>
<circle cx="128.8" cy="527.3" r="2.6"/>
<circle cx="129.5" cy="526.0" r="2.6"/>
<circle cx="130.1" cy="524.7" r="2.6"/>
<circle cx="130.7" cy="523.3" r="2.6"/>
<circle cx="131.3" cy="522.0" r="2.6"/>
<circle cx="132.4" cy="521.5" r="2.6"/>
<circle cx="133.5" cy="521.0" r="2.6"/>
<circle cx="135.6" cy="520.0" r="2.6"/>
<circle cx="147.0" cy="518.5" r="2.6"/>
<circle cx="148.5" cy="517.5" r="2.6"/>
<circle cx="150.0" cy="516.5" r="2.6"/>
<circle cx="151.2" cy="515.5" r="2.6"/>
<circle cx="152.5" cy="514.5" r="2.6"/>
<circle cx="153.5" cy="513.6" r="2.6"/>
<circle cx="154.4" cy="512.6" r="2.6"/>
<circle cx="155.4" cy="511.7" r="2.6"/>
<circle cx="162.4" cy="510.2" r="2.6"/>
<circle cx="162.8" cy="508.5" r="2.6"/>
<circle cx="163.1" cy="506.7" r="2.6"/>
<circle cx="163.5" cy="505.0" r="2.6"/>
<circle cx="164.0" cy="503.3" r="2.6"/>
<circle cx="164.5" cy="501.7" r="2.6"/>
<circle cx="165.0" cy="500.0" r="2.6"/>
<circle cx="166.0" cy="499.0" r="2.6"/>
<circle cx="167.0" cy="498.0" r="2.6"/>
<circle cx="168.2" cy="497.0" r="2.6"/>
<circle cx="169.3" cy="496.0" r="2.6"/>
<circle cx="169.7" cy="494.3" r="2.6"/>
<circle cx="170.1" cy="492.7" r="2.6"/>
<circle cx="170.5" cy="491.0" r="2.6"/>
<circle cx="171.0" cy="489.6" r="2.6"/>
<circle cx="171.5" cy="488.1" r="2.6"/>
<circle cx="172.0" cy="486.7" r="2.6"/>
<circle cx="173.2" cy="485.5" r="2.6"/>
<circle cx="174.3" cy="484.2" r="2.6"/>
<circle cx="175.5" cy="483.0" r="2.6"/>
<circle cx="176.5" cy="482.0" r="2.6"/>
<circle cx="177.4" cy="480.9" r="2.6"/>
<circle cx="178.4" cy="479.9" r="2.6"/>
<circle cx="179.4" cy="478.9" r="2.6"/>
<circle cx="179.4" cy="477.4" r="2.6"/>
<circle cx="179.4" cy="475.8" r="2.6"/>
<circle cx="179.4" cy="474.3" r="2.6"/>
<circle cx="180.6" cy="473.5" r="2.6"/>
<circle cx="181.8" cy="472.8" r="2.6"/>
<circle cx="183.0" cy="472.0" r="2.6"/>
<circle cx="184.5" cy="470.8" r="2.6"/>
<circle cx="186.0" cy="469.6" r="2.6"/>
<circle cx="186.5" cy="467.9" r="2.6"/>
<circle cx="186.9" cy="466.1" r="2.6"/>
<circle cx="187.4" cy="464.4" r="2.6"/>
<circle cx="188.8" cy="463.3" r="2.6"/>
<circle cx="190.1" cy="462.1" r="2.6"/>
<circle cx="191.5" cy="461.0" r="2.6"/>
<circle cx="192.0" cy="459.6" r="2.6"/>
<circle cx="192.5" cy="458.2" r="2.6"/>
<circle cx="193.0" cy="456.9" r="2.6"/>
<circle cx="193.5" cy="455.5" r="2.6"/>
<circle cx="194.2" cy="453.9" r="2.6"/>
<circle cx="194.9" cy="452.2" r="2.6"/>
<circle cx="195.6" cy="450.6" r="2.6"/>
<circle cx="230.4" cy="448.7" r="2.6"/>
<circle cx="231.4" cy="448.1" r="2.6"/>
<circle cx="232.5" cy="447.5" r="2.6"/>
<circle cx="233.8" cy="446.8" r="2.6"/>
<circle cx="235.0" cy="446.0" r="2.6"/>
<circle cx="235.7" cy="444.3" r="2.6"/>
<circle cx="236.3" cy="442.7" r="2.6"/>
<circle cx="237.0" cy="441.0" r="2.6"/>
<circle cx="237.6" cy="439.2" r="2.6"/>
<circle cx="238.1" cy="437.5" r="2.6"/>
<circle cx="238.7" cy="435.7" r="2.6"/>
<circle cx="239.8" cy="434.4" r="2.6"/>
<circle cx="241.0" cy="433.0" r="2.6"/>
<circle cx="242.2" cy="432.0" r="2.6"/>
<circle cx="243.3" cy="431.0" r="2.6"/>
<circle cx="243.3" cy="429.6" r="2.6"/>
<circle cx="243.3" cy="428.2" r="2.6"/>
<circle cx="243.3" cy="426.8" r="2.6"/>
<circle cx="243.3" cy="425.4" r="2.6"/>
<circle cx="244.7" cy="425.5" r="2.6"/>
<circle cx="246.0" cy="425.6" r="2.6"/>
<circle cx="247.2" cy="425.5" r="2.6"/>
<circle cx="248.5" cy="425.4" r="2.6"/>
<circle cx="249.8" cy="424.2" r="2.6"/>
<circle cx="251.0" cy="423.0" r="2.6"/>
<circle cx="252.5" cy="421.7" r="2.6"/>
<circle cx="254.0" cy="420.4" r="2.6"/>
<circle cx="255.5" cy="419.9" r="2.6"/>
<circle cx="257.0" cy="419.5" r="2.6"/>
<circle cx="258.3" cy="419.0" r="2.6"/>
<circle cx="259.6" cy="418.5" r="2.6"/>
<circle cx="260.1" cy="416.8" r="2.6"/>
<circle cx="260.5" cy="415.0" r="2.6"/>
<circle cx="260.9" cy="413.7" r="2.6"/>
<circle cx="261.3" cy="412.4" r="2.6"/>
<circle cx="268.0" cy="410.6" r="2.6"/>
<circle cx="269.2" cy="409.5" r="2.6"/>
<circle cx="270.4" cy="408.3" r="2.6"/>
<circle cx="282.4" cy="406.9" r="2.6"/>
<circle cx="282.9" cy="405.2" r="2.6"/>
<circle cx="283.5" cy="403.5" r="2.6"/>
<circle cx="284.1" cy="402.1" r="2.6"/>
<circle cx="284.6" cy="400.7" r="2.6"/>
<circle cx="285.8" cy="399.9" r="2.6"/>
<circle cx="287.0" cy="399.0" r="2.6"/>
<circle cx="288.9" cy="398.0" r="2.6"/>
<circle cx="289.1" cy="396.7" r="2.6"/>
<circle cx="289.4" cy="395.3" r="2.6"/>
<circle cx="289.6" cy="394.0" r="2.6"/>
<circle cx="289.9" cy="392.5" r="2.6"/>
<circle cx="290.2" cy="391.0" r="2.6"/>
<circle cx="290.8" cy="389.8" r="2.6"/>
<circle cx="291.4" cy="388.6" r="2.6"/>
<circle cx="292.0" cy="387.4" r="2.6"/>
<circle cx="305.4" cy="386.5" r="2.6"/>
<circle cx="312.0" cy="386.5" r="2.6"/>
<circle cx="312.7" cy="385.2" r="2.6"/>
<circle cx="313.3" cy="383.8" r="2.6"/>
<circle cx="314.0" cy="382.5" r="2.6"/>
<circle cx="314.7" cy="381.2" r="2.6"/>
<circle cx="315.3" cy="379.8" r="2.6"/>
<circle cx="316.0" cy="378.5" r="2.6"/>
<circle cx="316.8" cy="377.3" r="2.6"/>
<circle cx="317.7" cy="376.2" r="2.6"/>
<circle cx="318.5" cy="375.0" r="2.6"/>
<circle cx="319.6" cy="373.4" r="2.6"/>
<circle cx="320.7" cy="371.7" r="2.6"/>
<circle cx="321.9" cy="370.1" r="2.6"/>
<circle cx="323.0" cy="368.5" r="2.6"/>
<circle cx="323.8" cy="367.4" r="2.6"/>
<circle cx="324.6" cy="366.3" r="2.6"/>
<circle cx="325.4" cy="365.2" r="2.6"/>
<circle cx="325.9" cy="363.8" r="2.6"/>
<circle cx="326.3" cy="362.4" r="2.6"/>
<circle cx="351.3" cy="359.6" r="2.6"/>
<circle cx="352.6" cy="358.6" r="2.6"/>
<circle cx="354.0" cy="357.5" r="2.6"/>
<circle cx="355.4" cy="356.6" r="2.6"/>
<circle cx="356.9" cy="355.6" r="2.6"/>
<circle cx="366.5" cy="355.2" r="2.6"/>
<circle cx="366.9" cy="353.5" r="2.6"/>
<circle cx="367.2" cy="351.8" r="2.6"/>
<circle cx="367.8" cy="346.3" r="2.6"/>
<circle cx="368.7" cy="345.3" r="2.6"/>
<circle cx="369.7" cy="344.3" r="2.6"/>
<circle cx="370.6" cy="343.3" r="2.6"/>
<circle cx="388.0" cy="341.7" r="2.6"/>
<circle cx="388.5" cy="340.1" r="2.6"/>
<circle cx="389.1" cy="338.6" r="2.6"/>
<circle cx="389.6" cy="337.0" r="2.6"/>
<circle cx="391.1" cy="335.8" r="2.6"/>
<circle cx="392.5" cy="334.5" r="2.6"/>
<circle cx="393.8" cy="333.4" r="2.6"/>
<circle cx="395.0" cy="332.4" r="2.6"/>
<circle cx="395.7" cy="330.9" r="2.6"/>
<circle cx="396.3" cy="329.5" r="2.6"/>
<circle cx="397.0" cy="328.0" r="2.6"/>
<circle cx="397.6" cy="326.7" r="2.6"/>
<circle cx="398.3" cy="325.3" r="2.6"/>
<circle cx="398.9" cy="324.0" r="2.6"/>
<circle cx="399.5" cy="322.5" r="2.6"/>
<circle cx="400.1" cy="320.9" r="2.6"/>
<circle cx="400.7" cy="319.4" r="2.6"/>
<circle cx="402.1" cy="318.7" r="2.6"/>
<circle cx="403.5" cy="318.0" r="2.6"/>
<circle cx="404.9" cy="317.4" r="2.6"/>
<circle cx="406.3" cy="316.7" r="2.6"/>
<circle cx="407.2" cy="310.2" r="2.6"/>
<circle cx="415.2" cy="305.6" r="2.6"/>
<circle cx="415.5" cy="304.2" r="2.6"/>
<circle cx="415.7" cy="302.9" r="2.6"/>
<circle cx="416.0" cy="301.5" r="2.6"/>
<circle cx="430.0" cy="298.5" r="2.6"/>
<circle cx="430.6" cy="297.4" r="2.6"/>
<circle cx="431.3" cy="296.3" r="2.6"/>
<circle cx="446.0" cy="296.3" r="2.6"/>
<circle cx="447.2" cy="295.6" r="2.6"/>
<circle cx="448.5" cy="295.0" r="2.6"/>
<circle cx="449.6" cy="294.2" r="2.6"/>
<circle cx="450.7" cy="293.5" r="2.6"/>
<circle cx="451.6" cy="292.5" r="2.6"/>
<circle cx="452.6" cy="291.4" r="2.6"/>
<circle cx="453.5" cy="290.4" r="2.6"/>
<circle cx="460.0" cy="288.0" r="2.6"/>
<circle cx="460.3" cy="286.6" r="2.6"/>
<circle cx="460.6" cy="285.2" r="2.6"/>
<circle cx="471.0" cy="283.9" r="2.6"/>
<circle cx="472.5" cy="283.4" r="2.6"/>
<circle cx="474.0" cy="283.0" r="2.6"/>
<circle cx="475.4" cy="282.4" r="2.6"/>
<circle cx="476.7" cy="281.9" r="2.6"/>
<circle cx="477.9" cy="280.4" r="2.6"/>
<circle cx="479.0" cy="279.0" r="2.6"/>
<circle cx="480.1" cy="277.4" r="2.6"/>
<circle cx="481.3" cy="275.9" r="2.6"/>
<circle cx="482.1" cy="274.2" r="2.6"/>
<circle cx="483.0" cy="272.5" r="2.6"/>
<circle cx="483.7" cy="270.9" r="2.6"/>
<circle cx="484.4" cy="269.4" r="2.6"/>
<circle cx="485.0" cy="267.7" r="2.6"/>
<circle cx="485.7" cy="266.0" r="2.6"/>
<circle cx="486.1" cy="264.7" r="2.6"/>
<circle cx="486.5" cy="263.3" r="2.6"/>
<circle cx="486.9" cy="262.0" r="2.6"/>
<circle cx="487.6" cy="260.2" r="2.6"/>
<circle cx="488.3" cy="258.5" r="2.6"/>
<circle cx="489.0" cy="257.1" r="2.6"/>
<circle cx="489.6" cy="255.6" r="2.6"/>
<circle cx="490.3" cy="253.9" r="2.6"/>
<circle cx="490.9" cy="252.2" r="2.6"/>
<circle cx="491.6" cy="250.5" r="2.6"/>
<circle cx="492.4" cy="244.4" r="2.6"/>
<circle cx="493.5" cy="243.2" r="2.6"/>
<circle cx="494.7" cy="242.0" r="2.6"/>
<circle cx="495.9" cy="241.0" r="2.6"/>
<circle cx="497.0" cy="240.0" r="2.6"/>
<circle cx="497.5" cy="238.7" r="2.6"/>
<circle cx="498.0" cy="237.3" r="2.6"/>
<circle cx="498.5" cy="236.0" r="2.6"/>
<circle cx="499.0" cy="234.7" r="2.6"/>
<circle cx="499.5" cy="233.5" r="2.6"/>
<circle cx="500.0" cy="232.2" r="2.6"/>
<circle cx="501.5" cy="231.1" r="2.6"/>
<circle cx="503.0" cy="230.0" r="2.6"/>
<circle cx="504.3" cy="228.9" r="2.6"/>
<circle cx="505.6" cy="227.8" r="2.6"/>
<circle cx="506.6" cy="226.4" r="2.6"/>
<circle cx="507.6" cy="225.0" r="2.6"/>
<circle cx="508.6" cy="223.6" r="2.6"/>
<circle cx="509.6" cy="222.2" r="2.6"/>
<circle cx="509.8" cy="220.8" r="2.6"/>
<circle cx="510.0" cy="219.4" r="2.6"/>
<circle cx="510.2" cy="218.0" r="2.6"/>
<circle cx="510.4" cy="216.2" r="2.6"/>
<circle cx="510.7" cy="214.4" r="2.6"/>
<circle cx="524.4" cy="213.8" r="2.6"/>
<circle cx="530.0" cy="209.6" r="2.6"/>
<circle cx="531.5" cy="208.8" r="2.6"/>
<circle cx="533.0" cy="208.0" r="2.6"/>
<circle cx="534.3" cy="207.3" r="2.6"/>
<circle cx="535.6" cy="206.7" r="2.6"/>
<circle cx="536.0" cy="205.3" r="2.6"/>
<circle cx="536.5" cy="204.0" r="2.6"/>
<circle cx="536.9" cy="202.8" r="2.6"/>
<circle cx="537.3" cy="201.6" r="2.6"/>
<circle cx="554.0" cy="197.8" r="2.6"/>
<circle cx="555.9" cy="197.2" r="2.6"/>
<circle cx="557.8" cy="196.7" r="2.6"/>
<circle cx="558.5" cy="195.2" r="2.6"/>
<circle cx="559.3" cy="193.7" r="2.6"/>
<circle cx="560.0" cy="192.2" r="2.6"/>
<circle cx="559.9" cy="190.5" r="2.6"/>
<circle cx="559.8" cy="188.9" r="2.6"/>
<circle cx="559.7" cy="187.2" r="2.6"/>
<circle cx="559.6" cy="185.6" r="2.6"/>
<circle cx="565.6" cy="183.3" r="2.6"/>
<circle cx="566.4" cy="182.4" r="2.6"/>
<circle cx="567.2" cy="181.5" r="2.6"/>
<circle cx="568.9" cy="180.0" r="2.6"/>
<circle cx="571.0" cy="179.0" r="2.6"/>
<circle cx="572.1" cy="178.4" r="2.6"/>
<circle cx="573.3" cy="177.8" r="2.6"/>
<circle cx="574.1" cy="176.7" r="2.6"/>
<circle cx="575.0" cy="175.5" r="2.6"/>
<circle cx="575.9" cy="174.2" r="2.6"/>
<circle cx="576.7" cy="172.9" r="2.6"/>
<circle cx="582.9" cy="171.0" r="2.6"/>
<circle cx="583.4" cy="169.6" r="2.6"/>
<circle cx="583.9" cy="168.1" r="2.6"/>
<circle cx="584.4" cy="166.7" r="2.6"/>
<circle cx="585.0" cy="165.6" r="2.6"/>
<circle cx="585.6" cy="164.4" r="2.6"/>
</g>
<g font-family="'Liberation Sans', Arial, sans-serif" fill="#000">
<text x="353" y="120" font-size="11" font-weight="bold" text-anchor="middle" textLength="420" lengthAdjust="spacingAndGlyphs">Equity Curve Line - @GC 750 Share Bar(5/18/2016 18:21:11 - 12/16/2016 15:21:31)</text>
<text x="118" y="538" font-size="10.67" text-anchor="end">0</text>
<text x="118" y="492" font-size="10.67" text-anchor="end">10000</text>
<text x="118" y="445" font-size="10.67" text-anchor="end">20000</text>
<text x="118" y="398" font-size="10.67" text-anchor="end">30000</text>
<text x="118" y="352" font-size="10.67" text-anchor="end">40000</text>
<text x="118" y="305" font-size="10.67" text-anchor="end">50000</text>
<text x="118" y="258" font-size="10.67" text-anchor="end">60000</text>
<text x="118" y="212" font-size="10.67" text-anchor="end">70000</text>
<text x="118" y="165" font-size="10.67" text-anchor="end">80000</text>
<text x="122" y="599" font-size="10.67" text-anchor="middle">0</text>
<text x="187" y="599" font-size="10.67" text-anchor="middle">100</text>
<text x="251" y="599" font-size="10.67" text-anchor="middle">200</text>
<text x="316" y="599" font-size="10.67" text-anchor="middle">300</text>
<text x="381" y="599" font-size="10.67" text-anchor="middle">400</text>
<text x="445" y="599" font-size="10.67" text-anchor="middle">500</text>
<text x="510" y="599" font-size="10.67" text-anchor="middle">600</text>
<text x="574" y="599" font-size="10.67" text-anchor="middle">700</text>
<text x="639" y="599" font-size="10.67" text-anchor="middle">800</text>
<text x="380" y="625" font-size="15.5" text-anchor="middle">Trade Number</text>
<text transform="translate(76,369) rotate(-90)" font-size="15.5" text-anchor="middle">Equity($)</text>
<rect x="692.5" y="356.5" width="93" height="52" fill="#fff" stroke="#000" stroke-width="1" shape-rendering="crispEdges"/>
<text x="738" y="369" font-size="10.7" text-anchor="middle">Legend</text>
<rect x="694" y="383" width="42" height="1" shape-rendering="crispEdges"/>
<text x="750" y="388" font-size="10.7">Trades</text>
<circle cx="716.5" cy="398.5" r="2.5" fill="#00ee00"/>
<text x="750" y="402" font-size="10.7">Peaks</text>
</g>
</svg>

<!-- tabs -->
<div class="tab" style="left:14px;width:118px"><span style="left:5.5px">Performance Summary</span></div>
<div class="tab" style="left:132px;width:81px"><span style="left:6.3px">Trade Analysis</span></div>
<div class="tab" style="left:213px;width:64px"><span style="left:6.3px">Trades List</span></div>
<div class="tab" style="left:277px;width:97px"><span style="left:5.8px">Periodical Returns</span></div>
<div class="tab" style="left:486px;width:75px"><span style="left:4.5px">Trade Graphs</span></div>
<div class="tab" style="left:561px;width:48px"><span style="left:5.5px">Settings</span></div>
<div class="tab sel" style="left:373px;width:114px"><span style="left:7.9px">Performance Graphs</span></div>
</body>
</html>
